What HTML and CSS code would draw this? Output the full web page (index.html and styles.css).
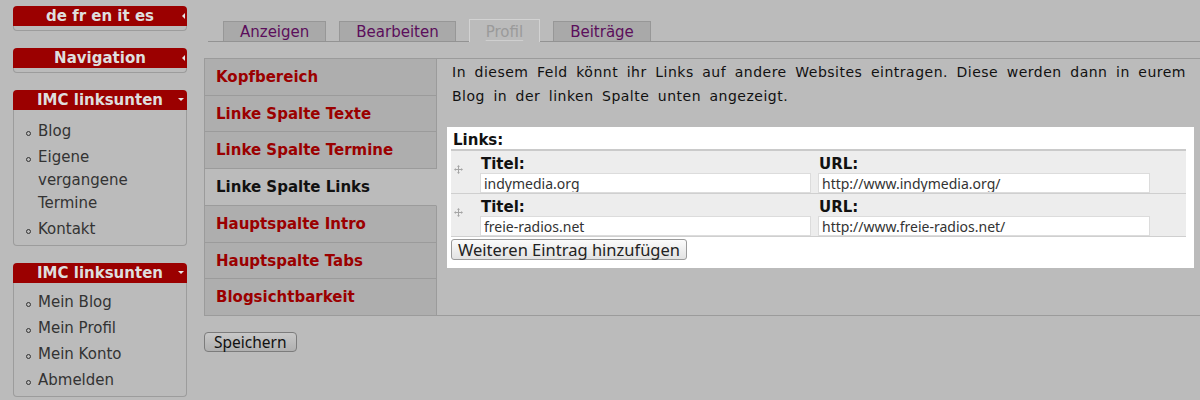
FILE: index.html
```html
<!DOCTYPE html>
<html lang="de">
<head>
    <meta charset="UTF-8">
    <title>Profil – IMC linksunten</title>
    <link rel="stylesheet" href="styles.css">
</head>
<body>

<div class="page">
    <aside class="sidebar">
        <div class="block">
            <h2 class="block-title">de fr en it es <span class="arrow arrow-left"></span></h2>
            <div class="block-body"></div>
        </div>

        <div class="block">
            <h2 class="block-title">Navigation <span class="arrow arrow-left"></span></h2>
            <div class="block-body"></div>
        </div>

        <div class="block">
            <h2 class="block-title">IMC linksunten <span class="arrow arrow-down"></span></h2>
            <div class="block-body">
                <ul class="menu">
                    <li>Blog</li>
                    <li>Eigene vergangene Termine</li>
                    <li>Kontakt</li>
                </ul>
            </div>
        </div>

        <div class="block">
            <h2 class="block-title">IMC linksunten <span class="arrow arrow-down"></span></h2>
            <div class="block-body">
                <ul class="menu menu-user">
                    <li>Mein Blog</li>
                    <li>Mein Profil</li>
                    <li>Mein Konto</li>
                    <li>Abmelden</li>
                </ul>
            </div>
        </div>
    </aside>

    <main class="content">
        <ul class="tabs">
            <li class="tab">Anzeigen</li>
            <li class="tab">Bearbeiten</li>
            <li class="tab active">Profil</li>
            <li class="tab">Beiträge</li>
        </ul>

        <div class="vtabs">
            <ul class="vtab-list">
                <li>Kopfbereich</li>
                <li>Linke Spalte Texte</li>
                <li>Linke Spalte Termine</li>
                <li class="selected">Linke Spalte Links</li>
                <li>Hauptspalte Intro</li>
                <li>Hauptspalte Tabs</li>
                <li>Blogsichtbarkeit</li>
            </ul>

            <div class="vtab-pane">
                <p class="description">In diesem Feld könnt ihr Links auf andere Websites eintragen. Diese werden dann in eurem Blog in der linken Spalte unten angezeigt.</p>

                <div class="links-box">
                    <div class="links-label">Links:</div>
                    <div class="links-table">
                        <div class="link-row">
                            <span class="handle">
                                <svg width="9" height="9" viewBox="0 0 9 9"><path d="M4.5 0 L6 1.8 H5 V4 H7.2 V3 L9 4.5 L7.2 6 V5 H5 V7.2 H6 L4.5 9 L3 7.2 H4 V5 H1.8 V6 L0 4.5 L1.8 3 V4 H4 V1.8 H3 Z" fill="#a5a5a5"/></svg>
                            </span>
                            <div class="field field-title">
                                <label>Titel:</label>
                                <input type="text" value="indymedia.org">
                            </div>
                            <div class="field field-url">
                                <label>URL:</label>
                                <input type="text" value="http://www.indymedia.org/">
                            </div>
                        </div>
                        <div class="link-row">
                            <span class="handle">
                                <svg width="9" height="9" viewBox="0 0 9 9"><path d="M4.5 0 L6 1.8 H5 V4 H7.2 V3 L9 4.5 L7.2 6 V5 H5 V7.2 H6 L4.5 9 L3 7.2 H4 V5 H1.8 V6 L0 4.5 L1.8 3 V4 H4 V1.8 H3 Z" fill="#a5a5a5"/></svg>
                            </span>
                            <div class="field field-title">
                                <label>Titel:</label>
                                <input type="text" value="freie-radios.net">
                            </div>
                            <div class="field field-url">
                                <label>URL:</label>
                                <input type="text" value="http://www.freie-radios.net/">
                            </div>
                        </div>
                    </div>
                    <button type="button" class="add-btn">Weiteren Eintrag hinzufügen</button>
                </div>
            </div>
        </div>

        <button type="submit" class="save-btn">Speichern</button>
    </main>
</div>

</body>
</html>
```

FILE: styles.css
```css
body {
    font-family: "DejaVu Sans", Verdana, sans-serif;
    background-color: #bbbbbb;
    color: #222;
    margin: 0;
    padding: 0;
}

ul {
    margin: 0;
    padding: 0;
}

.page {
    display: flex;
    align-items: flex-start;
}

/* left column blocks */
.sidebar {
    width: 174px;
    margin: 6px 0 0 13px;
    display: flex;
    flex-direction: column;
    gap: 17px;
}

.block-title {
    position: relative;
    margin: 0;
    height: 20px;
    line-height: 20px;
    background-color: #9b0000;
    color: #dedede;
    font-size: 15px;
    font-weight: bold;
    text-align: center;
    border-radius: 4px 4px 0 0;
}

.arrow {
    position: absolute;
    width: 0;
    height: 0;
}

.arrow-left {
    right: 2px;
    top: 7px;
    border-top: 3px solid transparent;
    border-bottom: 3px solid transparent;
    border-right: 3px solid #e6e6e6;
}

.arrow-down {
    right: 3px;
    top: 8px;
    border-left: 3px solid transparent;
    border-right: 3px solid transparent;
    border-top: 3px solid #e6e6e6;
}

.block-body {
    min-height: 4px;
    border: 1px solid #9c9c9c;
    border-top: none;
    border-radius: 0 0 4px 4px;
}

.menu {
    list-style: none;
    padding: 10px 12px 1px 23px;
    font-size: 15px;
    color: #333;
}

.menu li {
    position: relative;
    line-height: 23px;
    padding-bottom: 3px;
    padding-left: 1px;
}

.menu li::before {
    content: "";
    position: absolute;
    left: -11px;
    top: 11px;
    width: 3px;
    height: 3px;
    border: 1px solid #333;
    border-radius: 50%;
}

.menu-user {
    padding-top: 8px;
}

/* main area */
.content {
    flex: 1;
    margin-left: 17px;
}

.tabs {
    display: flex;
    align-items: flex-end;
    gap: 13px;
    list-style: none;
    margin: 19px 0 0 4px;
    padding-left: 15px;
    height: 22px;
    border-bottom: 1px solid #939393;
}

.tab {
    height: 19px;
    line-height: 21px;
    padding: 0 16px;
    background-color: #a9a9a9;
    border: 1px solid #979797;
    border-bottom: none;
    color: #5b0e5b;
    font-size: 15px;
}

.tab.active {
    height: 22px;
    line-height: 25px;
    margin-bottom: -1px;
    background-color: #bbbbbb;
    border-color: #d2d2d2;
    color: #9a9a9a;
    text-decoration: underline;
    text-decoration-color: #cfcfcf;
    text-underline-offset: 3px;
}

.vtabs {
    display: flex;
    margin-top: 16px;
    border-top: 1px solid #9b9b9b;
    border-bottom: 1px solid #9b9b9b;
}

.vtab-list {
    list-style: none;
    width: 232px;
    border-left: 1px solid #9b9b9b;
}

.vtab-list li {
    padding: 10px 11px 9px;
    line-height: 16.7px;
    background-color: #aeaeae;
    border-right: 1px solid #9b9b9b;
    border-bottom: 1px solid #9b9b9b;
    color: #9b0000;
    font-size: 15px;
    font-weight: bold;
}

.vtab-list li:last-child {
    border-bottom: none;
}

.vtab-list li.selected {
    background-color: #bbbbbb;
    border-right-color: #bbbbbb;
    color: #111;
}

.vtab-pane {
    flex: 1;
    padding: 1px 6px 0 10px;
}

.description {
    margin: 0 8px 0 5px;
    font-size: 14px;
    line-height: 24px;
    letter-spacing: 0.5px;
    word-spacing: 3.5px;
    text-align: justify;
    color: #111;
}

.links-box {
    margin-top: 19px;
    background-color: #fff;
    padding: 4px 8px 8px 4px;
}

.links-label {
    padding-left: 2px;
    line-height: 18px;
    font-size: 15px;
    font-weight: bold;
    color: #111;
}

.links-table {
    border-top: 2px solid #cacaca;
}

.link-row {
    display: flex;
    background-color: #ededed;
    border-bottom: 1px solid #cfcfcf;
    padding-top: 4px;
}

.handle {
    width: 29px;
    padding: 10px 0 0 3px;
    box-sizing: border-box;
}

.handle svg {
    display: block;
}

.field {
    display: flex;
    flex-direction: column;
}

.field-title {
    width: 331px;
    margin-right: 7px;
}

.field-url {
    width: 332px;
}

.field label {
    padding-left: 1px;
    line-height: 18px;
    font-size: 15px;
    font-weight: bold;
    color: #111;
}

.field input {
    height: 20px;
    box-sizing: border-box;
    margin: 0;
    padding: 0 3px;
    border: 1px solid #dcdcdc;
    background-color: #fff;
    font-family: "Noto Sans", "Open Sans", sans-serif;
    font-size: 14px;
    color: #333;
    outline: none;
}

.add-btn {
    margin-top: 2px;
    height: 21px;
    padding: 0 6px;
    border: 1px solid #9a9a9a;
    border-radius: 3px;
    background: linear-gradient(#fbfbfb, #e2e2e2);
    font-family: "Noto Sans", "Open Sans", sans-serif;
    font-size: 16.5px;
    line-height: 19px;
    color: #222;
}

.save-btn {
    margin-top: 16px;
    height: 20px;
    padding: 0 9px;
    border: 1px solid #7c7c7c;
    border-radius: 4px;
    background: linear-gradient(#c8c8c8, #b0b0b0);
    font-family: "Noto Sans", "Open Sans", sans-serif;
    font-size: 15.5px;
    line-height: 18px;
    color: #111;
}
```
